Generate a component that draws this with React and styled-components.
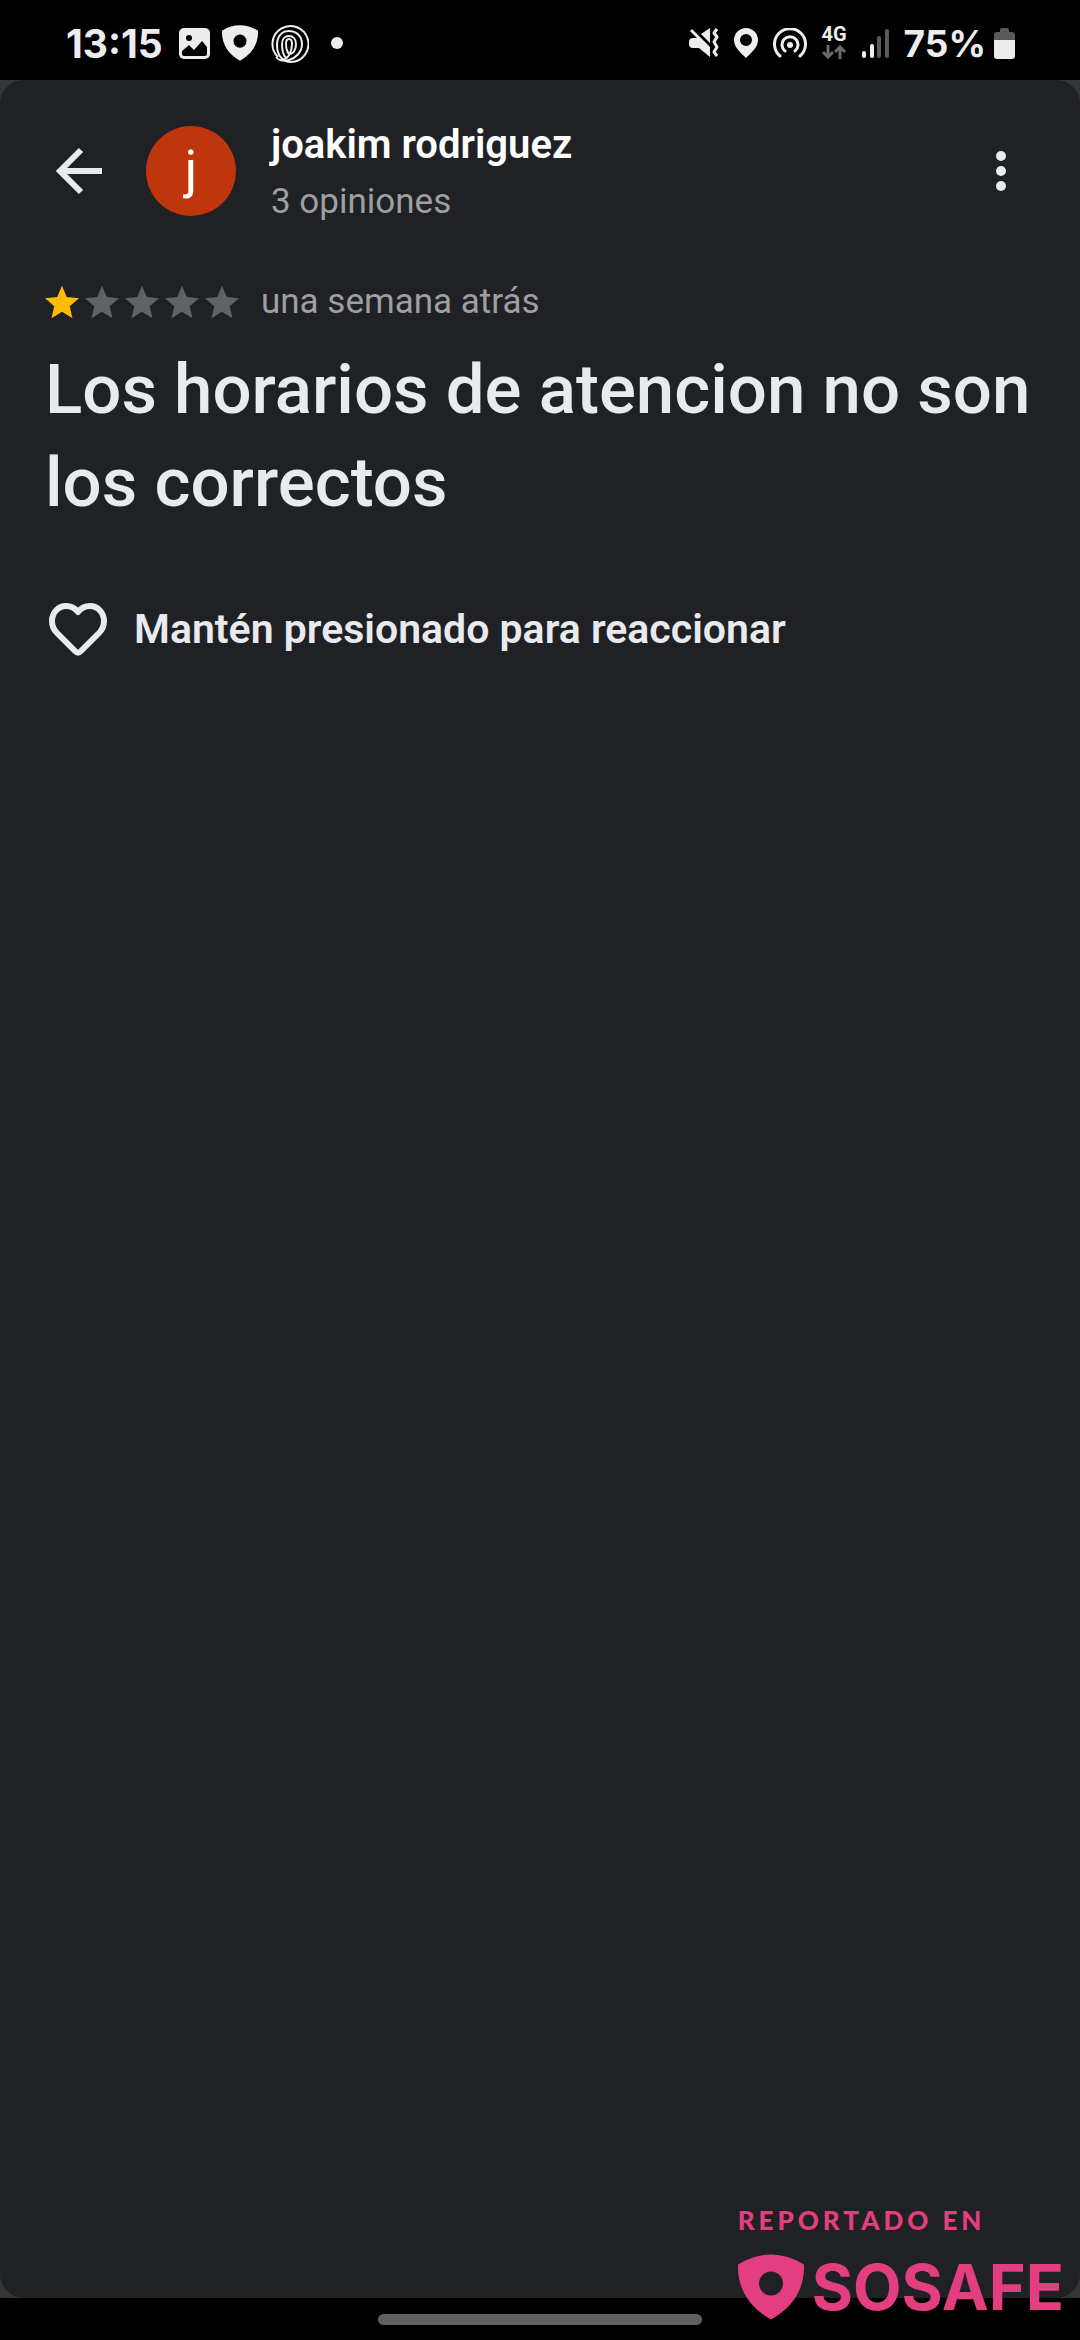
import React from "react";
import styled, { createGlobalStyle } from "styled-components";

const STAR_PATH =
  "M12 17.27 18.18 21l-1.64-7.03L22 9.24l-7.19-.61L12 2 9.19 8.63 2 9.24l5.46 4.73L5.82 21z";

const review = {
  author: "joakim rodriguez",
  opinions: "3 opiniones",
  rating: 1,
  date: "una semana atrás",
  text: "Los horarios de atencion no son los correctos",
};

const ShieldIcon = ({ size }) => (
  <svg width={size} height={size} viewBox="0 0 66 65" fill="currentColor">
    <path
      fillRule="evenodd"
      d="M0 10Q16 0 33 0T66 10Q67 46 33 65Q-1 46 0 10ZM33 17a12 12 0 1 0 0 24a12 12 0 1 0 0-24Z"
    />
  </svg>
);

const StatusBar = () => (
  <StatusWrap>
    <StatusGroup $gap={12}>
      <Clock>13:15</Clock>
      <svg width="31" height="31" viewBox="0 0 31 31">
        <rect width="31" height="31" rx="5" fill="#ededed" />
        <circle cx="10" cy="10" r="3" fill="#000" />
        <path d="M3 26v-3l7-6 5 5 8-9 5 6v7q0 2-2 2H5q-2 0-2-2z" fill="#000" />
      </svg>
      <ShieldIcon size={36} />
      <svg width="39" height="39" viewBox="0 0 39 39" fill="none" stroke="#ededed" strokeWidth="2">
        <path d="M8 33A18 18 0 1 1 21 38C14 38 7 33 7 21 7 12 12 7 19 7s13 5 13 13-6 14-13 16c-6 2-11 0-13-3" />
        <path d="M16 34c-3-3-4-8-4-14 0-5 3-8 7-8s7 3 7 8c0 6-3 10-6 10-2 0-4-4-4-10 0-3 1-5 3-5s3 2 3 5c0 7-3 14-9 16" />
      </svg>
      <Dot />
    </StatusGroup>
    <StatusGroup $gap={15}>
      <svg width="30" height="30" viewBox="0 0 30 30">
        <path d="M3 1 21 19v10L10 20H4q-4 0-4-4v-2q0-4 4-4h4L1 3zM12 6l9-6v15z" fill="#ededed" />
        <path d="M28 1l-3 4 3 4-3 5 3 5-3 5 3 4" fill="none" stroke="#ededed" strokeWidth="3" strokeLinejoin="round" />
      </svg>
      <svg width="24" height="30" viewBox="0 0 24 30">
        <path fillRule="evenodd" d="M12 0a12 12 0 0 1 12 12c0 7-6 12-12 18C6 24 0 19 0 12A12 12 0 0 1 12 0zm0 6a6 6 0 1 0 0 12a6 6 0 1 0 0-12z" fill="#ededed" />
      </svg>
      <svg width="34" height="30" viewBox="0 0 34 30" fill="none" stroke="#ededed" strokeWidth="3" strokeLinecap="round">
        <path d="M7 28a15.500 15.500 0 1 1 20 0M12 23a8 8 0 1 1 10 0" />
        <circle cx="17" cy="17" r="3" fill="#ededed" stroke="none" />
      </svg>
      <Network>
        4G
        <svg width="24" height="14" viewBox="0 0 24 14" fill="none" stroke="#6a6a6a" strokeWidth="3">
          <path d="M6 0v12M1 7l5 5 5-5M18 14V2M13 7l5-5 5 5" />
        </svg>
      </Network>
      <svg width="27" height="29" viewBox="0 0 27 29">
        <rect x="0" y="22" width="4" height="7" rx="2" fill="#ededed" />
        <rect x="8" y="15" width="4" height="14" rx="2" fill="#ededed" />
        <rect x="15" y="7" width="4" height="22" rx="2" fill="#5a5a5a" />
        <rect x="23" y="0" width="4" height="29" rx="2" fill="#5a5a5a" />
      </svg>
      <Battery>
        75%
        <svg width="21" height="31" viewBox="0 0 21 31">
          <path d="M0 12V7q0-3 3-3h3V2q0-2 2-2h5q2 0 2 2v2h3q3 0 3 3v5z" fill="#5a5a5a" />
          <path d="M0 12h21v16q0 3-3 3H3q-3 0-3-3z" fill="#ededed" />
        </svg>
      </Battery>
    </StatusGroup>
  </StatusWrap>
);

const App = () => {
  return (
    <Screen>
      <GlobalStyle />
      <StatusBar />
      <Backdrop>
        <Sheet>
          <Header>
            <IconButton aria-label="Atrás">
              <svg width="48" height="48" viewBox="0 0 48 48" fill="none" stroke="#e8eaed" strokeWidth="6">
                <path d="M47 24H6M26 3 5 24l21 21" />
              </svg>
            </IconButton>
            <Avatar>j</Avatar>
            <AuthorArea>
              <AuthorName>{review.author}</AuthorName>
              <Muted>{review.opinions}</Muted>
            </AuthorArea>
            <IconButton aria-label="Más opciones">
              <svg width="48" height="48" viewBox="0 0 48 48" fill="#e8eaed">
                <circle cx="24" cy="9" r="5" />
                <circle cx="24" cy="24" r="5" />
                <circle cx="24" cy="39" r="5" />
              </svg>
            </IconButton>
          </Header>
          <RatingRow>
            <Stars role="img" aria-label="1 de 5 estrellas">
              {[1, 2, 3, 4, 5].map(value => (
                <Star key={value} viewBox="2 2 20 19" $active={value <= review.rating}>
                  <path d={STAR_PATH} />
                </Star>
              ))}
            </Stars>
            <Muted>{review.date}</Muted>
          </RatingRow>
          <ReviewText>{review.text}</ReviewText>
          <ReactButton>
            <svg width="60" height="54" viewBox="0 0 60 54" fill="none" stroke="#e8eaed" strokeWidth="6" strokeLinejoin="round">
              <path d="M33 49q-3 3-6 0L9 31C5 27 4 23 4 19 4 11 10 4 18 4c5 0 9 2 12 6 3-4 7-6 12-6 8 0 14 7 14 15 0 4-1 8-5 12z" />
            </svg>
            Mantén presionado para reaccionar
          </ReactButton>
        </Sheet>
      </Backdrop>
      <NavBar>
        <NavHandle />
      </NavBar>
      <Watermark>
        <WatermarkLabel>REPORTADO EN</WatermarkLabel>
        <Brand>
          <ShieldIcon size={66} />
          SOSAFE
        </Brand>
      </Watermark>
    </Screen>
  );
};

export default App;

const GlobalStyle = createGlobalStyle`
  body {
    margin: 0;
    background-color: #000;
    font-family: Roboto, "Liberation Sans", sans-serif;
  }
`;

const Screen = styled.div`
  position: relative;
  min-height: 100vh;
  display: flex;
  flex-direction: column;
`;

const StatusWrap = styled.div`
  height: 80px;
  padding: 6px 65px 0 66px;
  display: flex;
  align-items: center;
  justify-content: space-between;
  box-sizing: border-box;
  color: #ededed;
`;

const StatusGroup = styled.div`
  display: flex;
  align-items: center;
  gap: ${({ $gap }) => $gap}px;
`;

const Clock = styled.span`
  margin-right: 4px;
  font-family: Inter, sans-serif;
  font-size: 39px;
  font-weight: 700;
`;

const Dot = styled.span`
  width: 12px;
  height: 12px;
  margin-left: 10px;
  border-radius: 50%;
  background-color: #ededed;
`;

const Network = styled.span`
  display: flex;
  flex-direction: column;
  align-items: center;
  gap: 4px;
  font-size: 20px;
  line-height: 14px;
  font-weight: 700;
`;

const Battery = styled.span`
  display: flex;
  align-items: center;
  gap: 8px;
  font-family: Inter, sans-serif;
  font-size: 37px;
  font-weight: 700;
`;

const Backdrop = styled.div`
  flex: 1;
  display: flex;
  background-color: #343538;
`;

const Sheet = styled.main`
  flex: 1;
  padding: 31px 45px;
  border-radius: 24px;
  background-color: #202124;
`;

const Header = styled.header`
  display: flex;
  align-items: center;
`;

const IconButton = styled.button`
  display: flex;
  padding: 10px;
  border: none;
  background: none;
  cursor: pointer;
`;

const Avatar = styled.div`
  width: 90px;
  height: 90px;
  margin: 0 35px 0 33px;
  padding-bottom: 4px;
  display: flex;
  align-items: center;
  justify-content: center;
  box-sizing: border-box;
  border-radius: 50%;
  background-color: #bf360c;
  color: #fff;
  font-size: 52px;
`;

const AuthorArea = styled.div`
  flex: 1;
  padding-top: 6px;
  display: flex;
  flex-direction: column;
`;

const AuthorName = styled.span`
  color: #fff;
  font-size: 40px;
  line-height: 56px;
  font-weight: 600;
`;

const Muted = styled.span`
  color: #9e9fa2;
  font-size: 35px;
  line-height: 58px;
`;

const RatingRow = styled.div`
  display: flex;
  align-items: center;
  gap: 22px;
  margin-top: 42px;
`;

const Stars = styled.div`
  display: flex;
  gap: 6px;
`;

const Star = styled.svg`
  width: 34px;
  height: 34px;
  fill: ${({ $active }) => ($active ? "#fbbc04" : "#5f6368")};
`;

const ReviewText = styled.p`
  margin: 12px 0 0;
  color: #e8eaed;
  font-size: 69px;
  line-height: 93px;
  font-weight: 500;
`;

const ReactButton = styled.button`
  display: flex;
  align-items: center;
  gap: 26px;
  margin-top: 73px;
  padding: 0 3px;
  border: none;
  background: none;
  color: #e8eaed;
  font-family: inherit;
  font-size: 41px;
  font-weight: 600;
  cursor: pointer;
`;

const NavBar = styled.div`
  height: 42px;
  display: flex;
  align-items: center;
  justify-content: center;
`;

const NavHandle = styled.div`
  width: 30%;
  height: 11px;
  border-radius: 6px;
  background-color: #5f5f5f;
`;

// sits over both the sheet and the navigation bar
const Watermark = styled.div`
  position: absolute;
  right: 16px;
  bottom: 20px;
  display: flex;
  flex-direction: column;
  gap: 18px;
  color: #e33e7f;
`;

const WatermarkLabel = styled.span`
  font-family: Lato, sans-serif;
  font-size: 26px;
  line-height: 32px;
  font-weight: 900;
  letter-spacing: 4px;
`;

const Brand = styled.span`
  display: flex;
  align-items: center;
  gap: 8px;
  font-family: Inter, sans-serif;
  font-size: 63px;
  line-height: 66px;
  font-weight: 700;
`;
